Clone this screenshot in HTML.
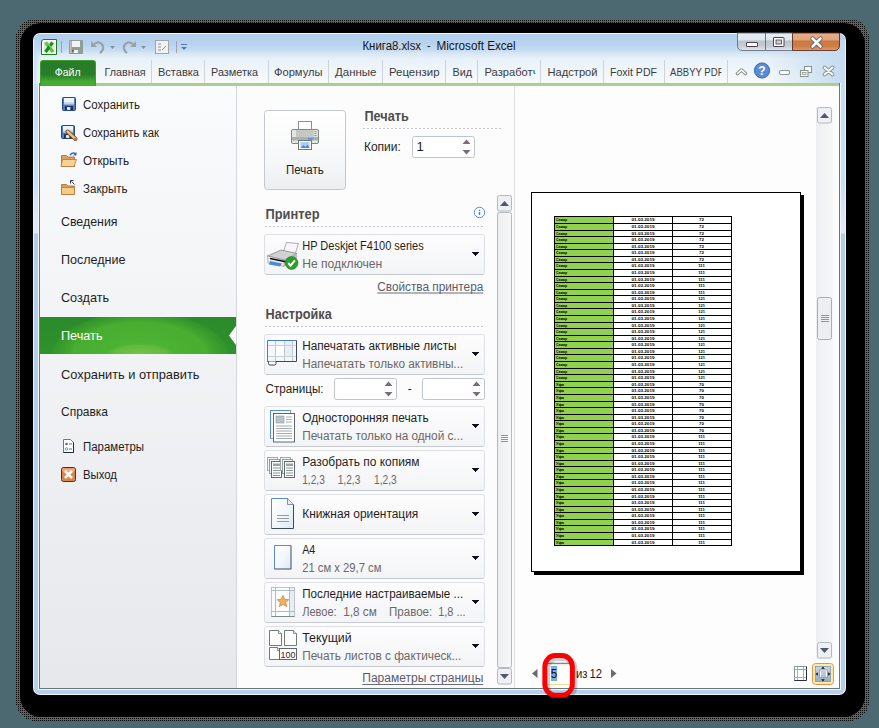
<!DOCTYPE html>
<html><head><meta charset="utf-8"><title>Excel Print</title>
<style>
html,body{margin:0;padding:0;background:#4c6870;overflow:hidden}
svg{display:block}
text{font-family:"Liberation Sans",sans-serif;white-space:pre}
</style></head><body>
<svg width="879" height="728" viewBox="0 0 879 728">
<defs>
<linearGradient id="gTitle" x1="0" y1="0" x2="1" y2="0">
  <stop offset="0" stop-color="#cfe1f4"/><stop offset="0.35" stop-color="#d9e8f6"/>
  <stop offset="0.6" stop-color="#dfeaf6"/><stop offset="1" stop-color="#d3e3f4"/>
</linearGradient>
<linearGradient id="gGlass" x1="0" y1="0" x2="0" y2="1">
  <stop offset="0" stop-color="#b2ceeb"/><stop offset="0.2" stop-color="#b8d3ee"/><stop offset="0.32" stop-color="#c6dbf1"/><stop offset="0.4" stop-color="#dae8f5"/><stop offset="0.5" stop-color="#e8f1f9"/><stop offset="0.75" stop-color="#f1f6fb"/><stop offset="1" stop-color="#f8fbfd"/>
</linearGradient>
<linearGradient id="gGlassH" x1="0" y1="0" x2="1" y2="0">
  <stop offset="0" stop-color="#c3daf0" stop-opacity="0.9"/><stop offset="0.008" stop-color="#c3daf0" stop-opacity="0"/><stop offset="0.9" stop-color="#c8dcf0" stop-opacity="0"/><stop offset="0.99" stop-color="#c3daf0" stop-opacity="0.9"/><stop offset="1" stop-color="#c3daf0" stop-opacity="0.9"/>
</linearGradient>
<linearGradient id="gFrame" x1="0" y1="34" x2="0" y2="694" gradientUnits="userSpaceOnUse">
  <stop offset="0" stop-color="#c6dcf1"/><stop offset="0.22" stop-color="#c8def2"/><stop offset="0.29" stop-color="#dfeaf6"/><stop offset="0.3015" stop-color="#dfeaf6"/><stop offset="0.3030" stop-color="#b3cde9"/><stop offset="1" stop-color="#b6cfea"/>
</linearGradient>
<linearGradient id="gTabs" x1="0" y1="0" x2="0" y2="1">
  <stop offset="0" stop-color="#e2ecf7"/><stop offset="0.5" stop-color="#eef4fb"/><stop offset="1" stop-color="#fbfcfe"/>
</linearGradient>
<linearGradient id="gFile" x1="0" y1="0" x2="0" y2="1">
  <stop offset="0" stop-color="#287c28"/><stop offset="0.55" stop-color="#2a7e2a"/><stop offset="0.72" stop-color="#3a9a30"/><stop offset="0.8" stop-color="#44aa30"/><stop offset="1" stop-color="#46ae30"/>
</linearGradient>
<linearGradient id="gNav" x1="0" y1="0" x2="0" y2="1">
  <stop offset="0" stop-color="#fafbfc"/><stop offset="1" stop-color="#e6e8ec"/>
</linearGradient>
<linearGradient id="gSel" x1="0" y1="0" x2="0" y2="1">
  <stop offset="0" stop-color="#2b8a2a"/><stop offset="1" stop-color="#2f922b"/>
</linearGradient>
<radialGradient id="gSelR" gradientUnits="userSpaceOnUse" cx="140" cy="356" r="90" gradientTransform="translate(140 356) scale(1 0.5) translate(-140 -356)">
  <stop offset="0" stop-color="#4fb634"/><stop offset="0.75" stop-color="#48ad30"/><stop offset="0.95" stop-color="#3a9c2c" stop-opacity="0.6"/><stop offset="1" stop-color="#3a9c2c" stop-opacity="0"/>
</radialGradient>
<radialGradient id="gSelR2" gradientUnits="userSpaceOnUse" cx="140" cy="356" r="36" gradientTransform="translate(140 356) scale(1 0.36) translate(-140 -356)">
  <stop offset="0" stop-color="#78c64a"/><stop offset="0.8" stop-color="#66bc40" stop-opacity="0.8"/><stop offset="1" stop-color="#5cb83c" stop-opacity="0"/>
</radialGradient>
<linearGradient id="gBtn" x1="0" y1="0" x2="0" y2="1">
  <stop offset="0" stop-color="#ffffff"/><stop offset="0.6" stop-color="#f7f8f9"/><stop offset="1" stop-color="#eceef0"/>
</linearGradient>
<linearGradient id="gDD" x1="0" y1="0" x2="0" y2="1">
  <stop offset="0" stop-color="#fdfdfe"/><stop offset="1" stop-color="#f3f4f6"/>
</linearGradient>
<linearGradient id="gTrack" x1="0" y1="0" x2="1" y2="0">
  <stop offset="0" stop-color="#eceef1"/><stop offset="1" stop-color="#f7f8f9"/>
</linearGradient>
</defs>
<rect x="0" y="0" width="879" height="728" fill="#4c6870"/>

<defs><pattern id="dots" x="0" y="0" width="2" height="2" patternUnits="userSpaceOnUse"><rect x="0" y="0" width="1" height="1" fill="#000"/></pattern></defs>
<rect x="16" y="19" width="853" height="702" rx="19" fill="url(#dots)" shape-rendering="crispEdges"/>
<rect x="20" y="23" width="845" height="694" rx="21" fill="#000"/>
<rect x="33" y="33" width="813" height="662" rx="7" fill="#eef6fc"/>
<rect x="34" y="34" width="811" height="660" rx="6" fill="url(#gFrame)"/>
<path d="M34 40 a6 6 0 0 1 6 -6 h799 a6 6 0 0 1 6 6 v44 h-811 z" fill="url(#gGlass)"/>
<rect x="34" y="40" width="811" height="44" fill="url(#gGlassH)"/>
<rect x="38" y="83" width="803" height="607" fill="#f4f8fc"/>
<rect x="39" y="83" width="801" height="606" fill="#6b7585"/>
<rect x="40" y="83" width="799" height="1" fill="#b8b8cc"/>
<rect x="40" y="84" width="799" height="2" fill="#aed08e"/>
<rect x="40" y="86" width="196" height="602" fill="url(#gNav)"/>
<rect x="236" y="86" width="1" height="602" fill="#d2d5da"/>
<rect x="237" y="86" width="277" height="602" fill="#fcfcfd"/>
<rect x="514" y="86" width="1" height="602" fill="#dcdee2"/>
<rect x="515" y="86" width="324" height="602" fill="#fdfdfd"/>
<path d="M44 39.5 H56.5 V54.5 H41.5 V42 a2.5 2.5 0 0 1 2.5 -2.5 z" fill="#fff" stroke="#1c7c1c"/>
<rect x="43.5" y="41.5" width="11" height="11" fill="#e2e6e2"/>
<path d="M45.5 42.5 L53 52" stroke="#5cc040" stroke-width="3.2"/><path d="M52.5 42.5 L45.5 52" stroke="#1e8a1e" stroke-width="3.2"/><path d="M47 42.5 L51 47.5" stroke="#7ad050" stroke-width="1.4"/>
<rect x="61" y="41" width="1" height="12" fill="#9aa4b0"/>
<rect x="69" y="40" width="14" height="14" rx="1" fill="#909e94"/><rect x="72" y="41" width="8" height="6" fill="#f2f4f4"/><rect x="70" y="41" width="1.5" height="12" fill="#b8c4c8"/><rect x="74" y="50" width="4" height="3" fill="#f0f2f2"/><rect x="72" y="50" width="1.5" height="1.5" fill="#804050"/>
<path d="M94 44 q6 -4 9 2 q1 4 -3 7" stroke="#9aa0a8" stroke-width="2.2" fill="none"/><path d="M91 41 l0 6 l6 0 z" fill="#9aa0a8"/>
<path d="M110 46 l5 0 l-2.5 3 z" fill="#8a9098"/>
<path d="M133 44 q-6 -4 -9 2 q-1 4 3 7" stroke="#9aa0a8" stroke-width="2.2" fill="none"/><path d="M136 41 l0 6 l-6 0 z" fill="#9aa0a8"/>
<path d="M141 46 l5 0 l-2.5 3 z" fill="#8a9098"/>
<rect x="155.5" y="40.5" width="13" height="13" fill="#f0f2f4" stroke="#9ea4ac"/><path d="M158 44h3M158 47h3M158 50h3M162 50 l4 -4" stroke="#8a9098" stroke-width="1"/>
<rect x="176" y="41" width="1" height="12" fill="#9aa4b0"/>
<rect x="181" y="44" width="6" height="1" fill="#5878a8"/><path d="M181 47 l6 0 l-3 3 z" fill="#5878a8"/>
<text x="362.5" y="50" font-size="12" fill="#161616" textLength="58.5" lengthAdjust="spacingAndGlyphs">Книга8.xlsx</text>
<text x="427" y="50" font-size="12" fill="#161616" textLength="3.5" lengthAdjust="spacingAndGlyphs">-</text>
<text x="436.5" y="50" font-size="12" fill="#161616" textLength="79.2" lengthAdjust="spacingAndGlyphs">Microsoft Excel</text>
<defs><linearGradient id="gWB" x1="0" y1="0" x2="0" y2="1"><stop offset="0" stop-color="#e6eef6"/><stop offset="0.4" stop-color="#dfe6ee"/><stop offset="0.45" stop-color="#bcc4cc"/><stop offset="0.75" stop-color="#c4ccd4"/><stop offset="1" stop-color="#e0e8f0"/></linearGradient>
<linearGradient id="gWC" x1="0" y1="0" x2="0" y2="1"><stop offset="0" stop-color="#eab08a"/><stop offset="0.4" stop-color="#e2a47a"/><stop offset="0.45" stop-color="#cc7a44"/><stop offset="0.75" stop-color="#cf7c46"/><stop offset="1" stop-color="#e09a6c"/></linearGradient></defs>
<path d="M737.5 33 v13 a4.5 4.5 0 0 0 4.5 4.5 h23.5 v-17.5 z" fill="url(#gWB)" stroke="#6a7280" stroke-width="0.9"/>
<rect x="765.5" y="33" width="27" height="17.5" fill="url(#gWB)" stroke="#6a7280" stroke-width="0.9"/>
<path d="M792.5 33 h47 v13 a4.5 4.5 0 0 1 -4.5 4.5 h-42.5 z" fill="url(#gWC)" stroke="#5a3020" stroke-width="0.9"/>
<rect x="746.5" y="42.5" width="11" height="4" rx="0.5" fill="#fff" stroke="#4a4050"/>
<rect x="773.5" y="37.5" width="10.5" height="9" rx="0.5" fill="#fff" stroke="#4a4050"/><rect x="776" y="40" width="5.5" height="4" fill="#c8d0d8" stroke="#4a4050" stroke-width="0.8"/>
<path d="M812.5 38.5 l8 8 M820.5 38.5 l-8 8" stroke="#505a64" stroke-width="4.2" stroke-linecap="round"/>
<path d="M812.5 38.5 l8 8 M820.5 38.5 l-8 8" stroke="#fff" stroke-width="2.6" stroke-linecap="round"/>
<path d="M40 86 v-23 a3 3 0 0 1 3 -3 h50 a3 3 0 0 1 3 3 v23 z" fill="#3aa02c"/>
<path d="M41 86 v-22.5 a2.5 2.5 0 0 1 2.5 -2.5 h49 a2.5 2.5 0 0 1 2.5 2.5 v22.5 z" fill="url(#gFile)"/>
<text x="54.7" y="76" font-size="11.5" fill="#ffffff" textLength="26" lengthAdjust="spacingAndGlyphs">Файл</text>
<defs><clipPath id="clipTab"><rect x="40" y="59" width="495.5" height="25"/><rect x="541" y="59" width="180.5" height="25"/></clipPath></defs><g clip-path="url(#clipTab)">
<text x="104.5" y="76" font-size="11" fill="#403a3c" textLength="41" lengthAdjust="spacingAndGlyphs">Главная</text>
<text x="158" y="76" font-size="11" fill="#403a3c" textLength="41" lengthAdjust="spacingAndGlyphs">Вставка</text>
<text x="211" y="76" font-size="11" fill="#403a3c" textLength="47" lengthAdjust="spacingAndGlyphs">Разметка</text>
<text x="274" y="76" font-size="11" fill="#403a3c" textLength="48.5" lengthAdjust="spacingAndGlyphs">Формулы</text>
<text x="335" y="76" font-size="11" fill="#403a3c" textLength="41.5" lengthAdjust="spacingAndGlyphs">Данные</text>
<text x="389" y="76" font-size="11" fill="#403a3c" textLength="50.5" lengthAdjust="spacingAndGlyphs">Рецензир</text>
<text x="452.5" y="76" font-size="11" fill="#403a3c" textLength="19.5" lengthAdjust="spacingAndGlyphs">Вид</text>
<text x="484.5" y="76" font-size="11" fill="#403a3c" textLength="54" lengthAdjust="spacingAndGlyphs">Разработч</text>
<text x="547.5" y="76" font-size="11" fill="#403a3c" textLength="50" lengthAdjust="spacingAndGlyphs">Надстрой</text>
<text x="610" y="76" font-size="11" fill="#403a3c" textLength="47" lengthAdjust="spacingAndGlyphs">Foxit PDF</text>
<text x="670" y="76" font-size="11" fill="#403a3c" textLength="53.5" lengthAdjust="spacingAndGlyphs">ABBYY PDF</text>
</g>
<rect x="151" y="60" width="1" height="23" fill="#cdd3da"/>
<rect x="204" y="60" width="1" height="23" fill="#cdd3da"/>
<rect x="268" y="60" width="1" height="23" fill="#cdd3da"/>
<rect x="328" y="60" width="1" height="23" fill="#cdd3da"/>
<rect x="382" y="60" width="1" height="23" fill="#cdd3da"/>
<rect x="445" y="60" width="1" height="23" fill="#cdd3da"/>
<rect x="477" y="60" width="1" height="23" fill="#cdd3da"/>
<rect x="540" y="60" width="1" height="23" fill="#cdd3da"/>
<rect x="603" y="60" width="1" height="23" fill="#cdd3da"/>
<rect x="664" y="60" width="1" height="23" fill="#cdd3da"/>
<rect x="727" y="60" width="1" height="23" fill="#cdd3da"/>
<path d="M737.5 73.5 l4 -3.5 l4 3.5" stroke="#8a968e" stroke-width="3.6" fill="none" stroke-linejoin="round" stroke-linecap="round"/><path d="M737.5 73.5 l4 -3.5 l4 3.5" stroke="#fff" stroke-width="1.6" fill="none" stroke-linejoin="round" stroke-linecap="round"/>
<circle cx="762" cy="70.5" r="7.6" fill="#5a8cd4" stroke="#2c5eae" stroke-width="0.9"/><text x="762" y="75" font-size="12" font-weight="700" fill="#fff" text-anchor="middle">?</text>
<rect x="779.5" y="70.5" width="10" height="4" rx="1.5" fill="#fff" stroke="#8a968e" stroke-width="1.1"/>
<rect x="804.5" y="66.5" width="7" height="6" fill="#fff" stroke="#8a968e" stroke-width="1.1"/><rect x="800.5" y="70.5" width="7.5" height="6" fill="#fff" stroke="#8a968e" stroke-width="1.1"/><rect x="802.5" y="72.5" width="3.5" height="2" fill="none" stroke="#8a968e" stroke-width="0.8"/>
<path d="M824.5 67.5 l8 7 M832.5 67.5 l-8 7" stroke="#8a968e" stroke-width="3.8" stroke-linecap="round"/><path d="M824.5 67.5 l8 7 M832.5 67.5 l-8 7" stroke="#fff" stroke-width="1.8" stroke-linecap="round"/>
<text x="83" y="108.5" font-size="12" fill="#1e1e1e" textLength="57" lengthAdjust="spacingAndGlyphs">Сохранить</text>
<text x="83" y="136.5" font-size="12" fill="#1e1e1e" textLength="76" lengthAdjust="spacingAndGlyphs">Сохранить как</text>
<text x="83" y="164.5" font-size="12" fill="#1e1e1e" textLength="46" lengthAdjust="spacingAndGlyphs">Открыть</text>
<text x="83" y="192.5" font-size="12" fill="#1e1e1e" textLength="44.5" lengthAdjust="spacingAndGlyphs">Закрыть</text>
<rect x="62.5" y="97.5" width="13" height="13" rx="1" fill="#4f7cc4" stroke="#27468a"/>
<rect x="64" y="98" width="10" height="6.3" fill="#eef3fa"/>
<rect x="64" y="102.2" width="10" height="2.1" fill="#c4d4ea"/>
<rect x="65" y="106.2" width="8" height="3.8" fill="#1f2c48"/>
<rect x="66.9" y="107.1" width="3.5" height="2.8" fill="#e8ecf2"/>
<rect x="61.5" y="125.5" width="13" height="13" rx="1" fill="#4f7cc4" stroke="#27468a"/>
<rect x="63" y="126" width="10" height="6.3" fill="#eef3fa"/>
<rect x="63" y="130.2" width="10" height="2.1" fill="#c4d4ea"/>
<rect x="64" y="134.2" width="8" height="3.8" fill="#1f2c48"/>
<rect x="65.9" y="135.1" width="3.5" height="2.8" fill="#e8ecf2"/>
<path d="M67.5 131.5 l8 7.5" stroke="#5a3a30" stroke-width="4" stroke-linecap="round"/><path d="M67.5 131.5 l8 7.5" stroke="#f0c860" stroke-width="2.4" stroke-linecap="round"/><path d="M74.5 138 l1.5 1.5" stroke="#e07040" stroke-width="2.2"/>
<path d="M61.5 155.5 h5 l1.5 1.5 h6.5 v9.5 h-13 z" fill="#dca060" stroke="#a06830" stroke-width="0.8"/>
<path d="M62.5 159.5 h14 l-2.5 7 h-13 z" fill="#f6d294" stroke="#b07838" stroke-width="0.8"/>
<path d="M70 155 q3 -3.5 6 -1" stroke="#3a68b8" stroke-width="1.4" fill="none"/><path d="M76.5 152 v3.5 h-3.5 z" fill="#3a68b8"/>
<path d="M61.5 184.5 h5 l1.5 1.5 h6.5 v8.5 h-13 z" fill="#dca060" stroke="#a06830" stroke-width="0.8"/>
<path d="M61.5 187.5 h13 v7 h-13 z" fill="#f4cc84" stroke="#b07838" stroke-width="0.8"/>
<path d="M71.5 181.5 l3 3" stroke="#303848" stroke-width="1"/><path d="M70.5 180.5 h3 M70.5 180.5 v3" stroke="#303848" stroke-width="1"/>
<text x="61" y="226" font-size="13" fill="#1e1e1e" textLength="56.5" lengthAdjust="spacingAndGlyphs">Сведения</text>
<text x="61" y="264" font-size="13" fill="#1e1e1e" textLength="64.5" lengthAdjust="spacingAndGlyphs">Последние</text>
<text x="61" y="302" font-size="13" fill="#1e1e1e" textLength="48" lengthAdjust="spacingAndGlyphs">Создать</text>
<text x="61" y="378.5" font-size="13" fill="#1e1e1e" textLength="138.5" lengthAdjust="spacingAndGlyphs">Сохранить и отправить</text>
<text x="61" y="416" font-size="13" fill="#1e1e1e" textLength="47" lengthAdjust="spacingAndGlyphs">Справка</text>
<rect x="40" y="317" width="196" height="37" fill="url(#gSel)"/>
<rect x="40" y="317" width="196" height="37" fill="url(#gSelR)"/>
<rect x="40" y="317" width="196" height="37" fill="url(#gSelR2)"/>
<path d="M236 326 L229 335.5 L236 345 Z" fill="#ffffff"/>
<text x="61" y="340" font-size="13" fill="#ffffff" textLength="41.5" lengthAdjust="spacingAndGlyphs">Печать</text>
<path d="M63.5 439.5 h7 l3 3 v10 h-10 z" fill="#fff" stroke="#5a7aa8"/><path d="M73.5 442.5 v10 h-10" fill="none" stroke="#20283a"/>
<circle cx="66.5" cy="444" r="1.3" fill="#5a6a80"/><circle cx="66.5" cy="449" r="1.3" fill="none" stroke="#4a7ac8" stroke-width="0.8"/><path d="M69 444h3M69 449h3" stroke="#4a7ac8" stroke-width="1.2"/>
<text x="83" y="450.5" font-size="12" fill="#1e1e1e" textLength="61" lengthAdjust="spacingAndGlyphs">Параметры</text>
<rect x="61.5" y="467.5" width="14" height="14" rx="2" fill="#d8864a" stroke="#6a2030"/><rect x="62.5" y="468.5" width="12" height="3" fill="#ecb080"/>
<path d="M65 471 l7 7 M72 471 l-7 7" stroke="#fff" stroke-width="2.6"/>
<text x="83" y="478.5" font-size="12" fill="#1e1e1e" textLength="34" lengthAdjust="spacingAndGlyphs">Выход</text>
<rect x="264.5" y="110.5" width="81" height="79" rx="3" fill="url(#gBtn)" stroke="#c3c8ce"/>
<rect x="298.5" y="121.5" width="13" height="8" fill="#fff" stroke="#8a948c"/>
<rect x="291.5" y="129.5" width="27" height="14" rx="1.5" fill="#e4e6e4" stroke="#7e8a84"/>
<rect x="296" y="130" width="18" height="7" fill="#c8cac8"/><path d="M297 132h16M297 135h16" stroke="#b0b4b0" stroke-width="0.6" stroke-dasharray="1 1"/>
<rect x="292" y="137" width="26" height="3.5" fill="#a9b2aa"/><rect x="308" y="138" width="5" height="1.5" fill="#5a8ad0"/>
<path d="M314.5 131.5h2M314.5 133.5h2M314.5 135.5h2" stroke="#707a74" stroke-width="0.8"/>
<rect x="298.5" y="140.5" width="13" height="9" fill="#fff" stroke="#6e7872"/><rect x="300.5" y="142" width="9" height="6" fill="#a8d0f4"/><path d="M300.5 148 l3 -3 l2 2 l2 -2.5 l2 3.5 z" fill="#4a88d0"/>
<text x="286" y="174" font-size="12" fill="#1e1e1e" textLength="37.7" lengthAdjust="spacingAndGlyphs">Печать</text>
<text x="364.5" y="121" font-size="14" fill="#4e4e4e" font-weight="700" textLength="44.3" lengthAdjust="spacingAndGlyphs">Печать</text>
<line x1="363" y1="128.5" x2="502" y2="128.5" stroke="#c4c6ca" stroke-dasharray="2 2"/>
<text x="363.9" y="151" font-size="12" fill="#1e1e1e" textLength="37" lengthAdjust="spacingAndGlyphs">Копии:</text>
<rect x="412.5" y="136.5" width="62" height="21" rx="2" fill="#fff" stroke="#bfc5cc"/>
<text x="416.5" y="151" font-size="13" fill="#1e1e1e">1</text>
<path d="M462.5 144 l4 -4.5 l4 4.5 z" fill="#7a6a7a"/><path d="M462.5 150 l4 4.5 l4 -4.5 z" fill="#7a6a7a"/>
<text x="265.5" y="219" font-size="14" fill="#4e4e4e" font-weight="700" textLength="54" lengthAdjust="spacingAndGlyphs">Принтер</text>
<circle cx="479.5" cy="212.5" r="5.2" fill="#fff" stroke="#5a8ad0"/><rect x="478.8" y="212" width="1.4" height="3" fill="#4a7ac8"/><rect x="478.8" y="209.8" width="1.4" height="1.3" fill="#4a7ac8"/>
<line x1="265" y1="226.5" x2="485" y2="226.5" stroke="#c4c6ca" stroke-dasharray="2 2"/>
<rect x="264.5" y="234.5" width="220" height="40" rx="2" fill="url(#gDD)" stroke="#dcdfe3"/>
<rect x="266" y="274" width="217" height="1" fill="#c6c9cd"/>
<g fill="#10101c" shape-rendering="crispEdges"><rect x="472" y="252" width="7" height="1"/><rect x="473" y="253" width="5" height="1"/><rect x="474" y="254" width="3" height="1"/><rect x="475" y="255" width="1" height="1"/></g>
<path d="M286.5 242.5 L298.5 243.5 L295 254.5 L283 252.5 Z" fill="#f6f6f6" stroke="#9a9a9a" stroke-width="0.8"/>
<path d="M267.5 256 L281 250 L297 253.5 L284 260 Z" fill="#d0d2d4" stroke="#7a7a7a" stroke-width="0.7"/>
<path d="M267.5 256 L284 260 L284 266.5 L268 263 Z" fill="#eeeeee" stroke="#8a8a8a" stroke-width="0.6"/>
<path d="M284 260 L297 253.5 L297 259 L284 266.5 Z" fill="#b8babc"/>
<path d="M270 258.5 L287 262" stroke="#101010" stroke-width="1.6"/>
<path d="M270 261 L282 263.5 L280 266.5 L269 264.5 Z" fill="#4a8ad8"/>
<circle cx="291.6" cy="263" r="6.4" fill="#2c9e2a" stroke="#1e7a1e" stroke-width="0.6"/><path d="M288.3 263 l2.3 2.6 l4.3 -5.2" stroke="#fff" stroke-width="2" fill="none"/>
<text x="302.2" y="249.9" font-size="12" fill="#1e1e1e" textLength="121.5" lengthAdjust="spacingAndGlyphs">HP Deskjet F4100 series</text>
<text x="302.2" y="267.9" font-size="12" fill="#6c6866" textLength="80" lengthAdjust="spacingAndGlyphs">Не подключен</text>
<text x="377.3" y="290.9" font-size="12" fill="#5a5a6a" textLength="106" lengthAdjust="spacingAndGlyphs">Свойства принтера</text>
<rect x="377.3" y="292.5" width="106" height="1" fill="#6a6a7a"/>
<text x="265.5" y="319" font-size="14" fill="#4e4e4e" font-weight="700" textLength="66.3" lengthAdjust="spacingAndGlyphs">Настройка</text>
<line x1="265" y1="326.5" x2="485" y2="326.5" stroke="#c4c6ca" stroke-dasharray="2 2"/>
<rect x="264.5" y="334.5" width="220" height="40" rx="2" fill="url(#gDD)" stroke="#dcdfe3"/>
<rect x="266" y="374" width="217" height="1" fill="#c6c9cd"/>
<g fill="#10101c" shape-rendering="crispEdges"><rect x="472" y="352" width="7" height="1"/><rect x="473" y="353" width="5" height="1"/><rect x="474" y="354" width="3" height="1"/><rect x="475" y="355" width="1" height="1"/></g>
<rect x="267.5" y="340.5" width="29" height="21" fill="#f4f8fc"/><rect x="276" y="346" width="8" height="10" fill="#fff"/><rect x="285" y="341" width="7" height="15" fill="#e6eef8"/>
<path d="M275.5 341v20M284.5 341v20M292.5 341v20" stroke="#c0c8c8" stroke-width="1"/><path d="M268 345.5h28M268 356.5h28" stroke="#c8d0cc" stroke-width="1"/>
<path d="M267.5 361.5 v-21 h29" fill="none" stroke="#4a7ac8"/><path d="M296.5 340.5 v21 h-29" fill="none" stroke="#3e4658"/>
<path d="M268.5 361.5 v2 a1.5 1.5 0 0 0 1.5 1.5 h4.5 a1.5 1.5 0 0 0 1.5 -1.5 v-2" fill="#fff" stroke="#3e4658"/>
<text x="302.2" y="349.9" font-size="12" fill="#1e1e1e" textLength="154.3" lengthAdjust="spacingAndGlyphs">Напечатать активные листы</text>
<text x="302.2" y="367.9" font-size="12" fill="#6c6866" textLength="161" lengthAdjust="spacingAndGlyphs">Напечатать только активны...</text>
<text x="265.6" y="392.8" font-size="12" fill="#1e1e1e" textLength="58" lengthAdjust="spacingAndGlyphs">Страницы:</text>
<rect x="334.5" y="378.5" width="62" height="21" rx="2" fill="#fff" stroke="#bfc5cc"/>
<path d="M384.5 386 l4 -4.5 l4 4.5 z" fill="#7a6a7a"/><path d="M384.5 392 l4 4.5 l4 -4.5 z" fill="#7a6a7a"/>
<rect x="422.5" y="378.5" width="62" height="21" rx="2" fill="#fff" stroke="#bfc5cc"/>
<path d="M472.5 386 l4 -4.5 l4 4.5 z" fill="#7a6a7a"/><path d="M472.5 392 l4 4.5 l4 -4.5 z" fill="#7a6a7a"/>
<text x="407.8" y="392.8" font-size="12" fill="#1e1e1e">-</text>
<rect x="264.5" y="406.5" width="220" height="40" rx="2" fill="url(#gDD)" stroke="#dcdfe3"/>
<rect x="266" y="446" width="217" height="1" fill="#c6c9cd"/>
<g fill="#10101c" shape-rendering="crispEdges"><rect x="472" y="424" width="7" height="1"/><rect x="473" y="425" width="5" height="1"/><rect x="474" y="426" width="3" height="1"/><rect x="475" y="427" width="1" height="1"/></g>
<rect x="270.5" y="410.5" width="20" height="28" fill="#f4f8fc" stroke="#7890a8" stroke-width="0.8"/><path d="M270.5 438.5 v-28 h20" fill="none" stroke="#5a8ad0"/>
<rect x="273.5" y="413.5" width="21" height="28.5" fill="#fff" stroke="#4e5a5a" stroke-width="0.9"/><rect x="276" y="416" width="8" height="7" fill="#b8c4c8" stroke="#8a9898" stroke-width="0.6"/><path d="M286 417h6M286 419.5h6M286 422h6M276 426h16M276 428.5h16M276 431h16M276 433.5h16M276 436h16M276 438.5h16" stroke="#8a9494" stroke-width="0.8"/>
<text x="302.2" y="421.9" font-size="12" fill="#1e1e1e" textLength="126.4" lengthAdjust="spacingAndGlyphs">Односторонняя печать</text>
<text x="302.2" y="439.9" font-size="12" fill="#6c6866" textLength="161" lengthAdjust="spacingAndGlyphs">Печатать только на одной с...</text>
<rect x="264.5" y="450.5" width="220" height="40" rx="2" fill="url(#gDD)" stroke="#dcdfe3"/>
<rect x="266" y="490" width="217" height="1" fill="#c6c9cd"/>
<g fill="#10101c" shape-rendering="crispEdges"><rect x="472" y="468" width="7" height="1"/><rect x="473" y="469" width="5" height="1"/><rect x="474" y="470" width="3" height="1"/><rect x="475" y="471" width="1" height="1"/></g>
<rect x="267.5" y="457.5" width="10" height="13" fill="#f0f4f8" stroke="#8a9a98" stroke-width="0.8"/>
<rect x="269.5" y="459.5" width="10" height="14" fill="#f6f8fa" stroke="#7a8a88" stroke-width="0.8"/>
<rect x="271.5" y="461.5" width="10" height="16" fill="#fff" stroke="#4e5e5a" stroke-width="0.9"/>
<rect x="273" y="463.5" width="7" height="2.5" fill="#98a4a0"/><path d="M273 468h7M273 470.5h7M273 473h7M273 475.5h7" stroke="#6a7a76" stroke-width="0.8"/>
<rect x="280.5" y="457.5" width="10" height="13" fill="#f0f4f8" stroke="#8a9a98" stroke-width="0.8"/>
<rect x="282.5" y="459.5" width="10" height="14" fill="#f6f8fa" stroke="#7a8a88" stroke-width="0.8"/>
<rect x="284.5" y="461.5" width="10" height="16" fill="#fff" stroke="#4e5e5a" stroke-width="0.9"/>
<rect x="286" y="463.5" width="7" height="2.5" fill="#98a4a0"/><path d="M286 468h7M286 470.5h7M286 473h7M286 475.5h7" stroke="#6a7a76" stroke-width="0.8"/>
<text x="302.2" y="465.9" font-size="12" fill="#1e1e1e" textLength="117.4" lengthAdjust="spacingAndGlyphs">Разобрать по копиям</text>
<text x="302.2" y="483.9" font-size="12" fill="#6c6866" textLength="22.7" lengthAdjust="spacingAndGlyphs">1,2,3</text>
<text x="337.7" y="483.9" font-size="12" fill="#6c6866" textLength="22.7" lengthAdjust="spacingAndGlyphs">1,2,3</text>
<text x="374" y="483.9" font-size="12" fill="#6c6866" textLength="22.7" lengthAdjust="spacingAndGlyphs">1,2,3</text>
<rect x="264.5" y="494.5" width="220" height="40" rx="2" fill="url(#gDD)" stroke="#dcdfe3"/>
<rect x="266" y="534" width="217" height="1" fill="#c6c9cd"/>
<g fill="#10101c" shape-rendering="crispEdges"><rect x="472" y="512" width="7" height="1"/><rect x="473" y="513" width="5" height="1"/><rect x="474" y="514" width="3" height="1"/><rect x="475" y="515" width="1" height="1"/></g>
<path d="M271.5 498.5 h16 l6 6 v24 h-22 z" fill="url(#gPg)"/><path d="M271.5 528.5 v-30 h16" fill="none" stroke="#5a8ad0"/><path d="M287.5 498.5 l6 6 v24 h-22" fill="none" stroke="#3e4a5a"/><path d="M287.5 498.5 v6 h6" fill="#e8eef6" stroke="#6a7a8a" stroke-width="0.8"/><path d="M277 515.5h12M277 518.5h12M277 521.5h12" stroke="#8a9498" stroke-width="0.9"/>
<text x="302.2" y="517.9" font-size="12" fill="#1e1e1e" textLength="116.1" lengthAdjust="spacingAndGlyphs">Книжная ориентация</text>
<rect x="264.5" y="538.5" width="220" height="40" rx="2" fill="url(#gDD)" stroke="#dcdfe3"/>
<rect x="266" y="578" width="217" height="1" fill="#c6c9cd"/>
<g fill="#10101c" shape-rendering="crispEdges"><rect x="472" y="556" width="7" height="1"/><rect x="473" y="557" width="5" height="1"/><rect x="474" y="558" width="3" height="1"/><rect x="475" y="559" width="1" height="1"/></g>
<defs><linearGradient id="gPg" x1="0" y1="0" x2="1" y2="1"><stop offset="0" stop-color="#ffffff"/><stop offset="0.5" stop-color="#f4f8fc"/><stop offset="1" stop-color="#dce8f4"/></linearGradient></defs>
<rect x="274.5" y="545.5" width="16.5" height="23.5" fill="url(#gPg)"/><path d="M274.5 569 V545.5 H291" fill="none" stroke="#5a8ad0"/><path d="M291 545.5 V569 H274.5" fill="none" stroke="#3e4a5a"/>
<text x="302.2" y="553.9" font-size="12" fill="#1e1e1e" textLength="13.1" lengthAdjust="spacingAndGlyphs">A4</text>
<text x="302.2" y="571.9" font-size="12" fill="#6c6866" textLength="79.2" lengthAdjust="spacingAndGlyphs">21 см x 29,7 см</text>
<rect x="264.5" y="582.5" width="220" height="40" rx="2" fill="url(#gDD)" stroke="#dcdfe3"/>
<rect x="266" y="622" width="217" height="1" fill="#c6c9cd"/>
<g fill="#10101c" shape-rendering="crispEdges"><rect x="472" y="600" width="7" height="1"/><rect x="473" y="601" width="5" height="1"/><rect x="474" y="602" width="3" height="1"/><rect x="475" y="603" width="1" height="1"/></g>
<rect x="271.5" y="587.5" width="23" height="29" fill="#fafcfe" stroke="#b4bec4" stroke-width="0.9"/><rect x="289" y="588" width="5" height="28" fill="#e4eef8"/>
<path d="M275.5 587v30M289.5 587v30M271 590.5h24M271 611.5h24" stroke="#a8b4b8" stroke-width="0.9"/><path d="M271.5 616.5h23" stroke="#7a8a88"/>
<path d="M283 595.5 l1.7 3.8 l4.1 0.4 l-3.1 2.7 l0.9 4.1 l-3.6 -2.1 l-3.6 2.1 l0.9 -4.1 l-3.1 -2.7 l4.1 -0.4 z" fill="#f0b060" stroke="#d07830" stroke-width="0.7"/>
<text x="302.2" y="597.9" font-size="12" fill="#1e1e1e" textLength="161" lengthAdjust="spacingAndGlyphs">Последние настраиваемые ...</text>
<text x="302.2" y="615.9" font-size="12" fill="#6c6866" textLength="34.4" lengthAdjust="spacingAndGlyphs">Левое:</text>
<text x="343.2" y="615.9" font-size="12" fill="#6c6866" textLength="33.6" lengthAdjust="spacingAndGlyphs">1,8 см</text>
<text x="389" y="615.9" font-size="12" fill="#6c6866" textLength="43.2" lengthAdjust="spacingAndGlyphs">Правое:</text>
<text x="438.2" y="615.9" font-size="12" fill="#6c6866" textLength="27.3" lengthAdjust="spacingAndGlyphs">1,8 ...</text>
<rect x="264.5" y="626.5" width="220" height="40" rx="2" fill="url(#gDD)" stroke="#dcdfe3"/>
<rect x="266" y="666" width="217" height="1" fill="#c6c9cd"/>
<g fill="#10101c" shape-rendering="crispEdges"><rect x="472" y="644" width="7" height="1"/><rect x="473" y="645" width="5" height="1"/><rect x="474" y="646" width="3" height="1"/><rect x="475" y="647" width="1" height="1"/></g>
<path d="M269.5 630.5 H278.5 L281.5 633.5 V645.5 H269.5 Z" fill="#fff" stroke="#5e6e66" stroke-width="0.9"/><path d="M278.5 630.5 V633.5 H281.5" fill="#e8eef4" stroke="#5e6e66" stroke-width="0.7"/>
<path d="M284.5 630.5 H293.5 L296.5 633.5 V645.5 H284.5 Z" fill="#fff" stroke="#5e6e66" stroke-width="0.9"/><path d="M293.5 630.5 V633.5 H296.5" fill="#e8eef4" stroke="#5e6e66" stroke-width="0.7"/>
<path d="M269.5 647.5 H277.5 L280.5 650.5 V659.5 H269.5 Z" fill="#fff" stroke="#5e6e66" stroke-width="0.9"/><path d="M277.5 647.5 V650.5 H280.5" fill="#e8eef4" stroke="#5e6e66" stroke-width="0.7"/>
<rect x="279.5" y="648.5" width="17" height="11" fill="#fff" stroke="#4e5a56" stroke-width="0.9"/>
<text x="288" y="658" font-size="9.5" fill="#3a1a28" text-anchor="middle" textLength="15" lengthAdjust="spacingAndGlyphs">100</text>
<text x="302.2" y="641.9" font-size="12" fill="#1e1e1e" textLength="49.5" lengthAdjust="spacingAndGlyphs">Текущий</text>
<text x="302.2" y="659.9" font-size="12" fill="#6c6866" textLength="159.2" lengthAdjust="spacingAndGlyphs">Печать листов с фактическ...</text>
<text x="362.3" y="682.4" font-size="12" fill="#5a5a6a" textLength="121" lengthAdjust="spacingAndGlyphs">Параметры страницы</text>
<rect x="362.3" y="684" width="121" height="1" fill="#6a6a7a"/>
<rect x="497" y="195" width="15" height="490" fill="#f2f3f5"/>
<rect x="497.5" y="195.5" width="14" height="15.5" rx="2" fill="#eef0f3" stroke="#b4bac2"/>
<path d="M500 206 h9 l-4.5 -5 z" fill="#4e5a6c"/>
<rect x="497.5" y="212.5" width="14" height="455" rx="2" fill="url(#gTrack)" stroke="#b4bac2"/>
<path d="M501 435.5h7M501 437.5h7M501 439.5h7M501 441.5h7" stroke="#8a9a94" stroke-width="1"/>
<rect x="497.5" y="668.5" width="14" height="15.5" rx="2" fill="#eef0f3" stroke="#b4bac2"/>
<path d="M500 674 h9 l-4.5 5 z" fill="#4e5a6c"/>
<rect x="534" y="195" width="270" height="380" fill="#000"/>
<rect x="531.5" y="192.5" width="269" height="379" fill="#fff" stroke="#000"/>
<rect x="554" y="216" width="59" height="329" fill="#92d050"/>
<g shape-rendering="crispEdges">
<rect x="554" y="216" width="178" height="1" fill="#000"/>
<rect x="554" y="223" width="178" height="1" fill="#000"/>
<rect x="554" y="230" width="178" height="1" fill="#000"/>
<rect x="554" y="236" width="178" height="1" fill="#000"/>
<rect x="554" y="243" width="178" height="1" fill="#000"/>
<rect x="554" y="249" width="178" height="1" fill="#000"/>
<rect x="554" y="256" width="178" height="1" fill="#000"/>
<rect x="554" y="262" width="178" height="1" fill="#000"/>
<rect x="554" y="269" width="178" height="1" fill="#000"/>
<rect x="554" y="276" width="178" height="1" fill="#000"/>
<rect x="554" y="282" width="178" height="1" fill="#000"/>
<rect x="554" y="289" width="178" height="1" fill="#000"/>
<rect x="554" y="295" width="178" height="1" fill="#000"/>
<rect x="554" y="302" width="178" height="1" fill="#000"/>
<rect x="554" y="308" width="178" height="1" fill="#000"/>
<rect x="554" y="315" width="178" height="1" fill="#000"/>
<rect x="554" y="322" width="178" height="1" fill="#000"/>
<rect x="554" y="328" width="178" height="1" fill="#000"/>
<rect x="554" y="335" width="178" height="1" fill="#000"/>
<rect x="554" y="341" width="178" height="1" fill="#000"/>
<rect x="554" y="348" width="178" height="1" fill="#000"/>
<rect x="554" y="354" width="178" height="1" fill="#000"/>
<rect x="554" y="361" width="178" height="1" fill="#000"/>
<rect x="554" y="368" width="178" height="1" fill="#000"/>
<rect x="554" y="374" width="178" height="1" fill="#000"/>
<rect x="554" y="381" width="178" height="1" fill="#000"/>
<rect x="554" y="387" width="178" height="1" fill="#000"/>
<rect x="554" y="394" width="178" height="1" fill="#000"/>
<rect x="554" y="401" width="178" height="1" fill="#000"/>
<rect x="554" y="407" width="178" height="1" fill="#000"/>
<rect x="554" y="414" width="178" height="1" fill="#000"/>
<rect x="554" y="420" width="178" height="1" fill="#000"/>
<rect x="554" y="427" width="178" height="1" fill="#000"/>
<rect x="554" y="433" width="178" height="1" fill="#000"/>
<rect x="554" y="440" width="178" height="1" fill="#000"/>
<rect x="554" y="447" width="178" height="1" fill="#000"/>
<rect x="554" y="453" width="178" height="1" fill="#000"/>
<rect x="554" y="460" width="178" height="1" fill="#000"/>
<rect x="554" y="466" width="178" height="1" fill="#000"/>
<rect x="554" y="473" width="178" height="1" fill="#000"/>
<rect x="554" y="479" width="178" height="1" fill="#000"/>
<rect x="554" y="486" width="178" height="1" fill="#000"/>
<rect x="554" y="493" width="178" height="1" fill="#000"/>
<rect x="554" y="499" width="178" height="1" fill="#000"/>
<rect x="554" y="506" width="178" height="1" fill="#000"/>
<rect x="554" y="512" width="178" height="1" fill="#000"/>
<rect x="554" y="519" width="178" height="1" fill="#000"/>
<rect x="554" y="525" width="178" height="1" fill="#000"/>
<rect x="554" y="532" width="178" height="1" fill="#000"/>
<rect x="554" y="539" width="178" height="1" fill="#000"/>
<rect x="554" y="545" width="178" height="1" fill="#000"/>
<rect x="554" y="216" width="1" height="330" fill="#000"/>
<rect x="613" y="216" width="1" height="330" fill="#000"/>
<rect x="672" y="216" width="1" height="330" fill="#000"/>
<rect x="731" y="216" width="1" height="330" fill="#000"/>
</g>
<g font-weight="700" fill="#000">
<text x="556" y="221.00" font-size="4.1" textLength="11" lengthAdjust="spacingAndGlyphs">Самар</text>
<text x="631.5" y="221.00" font-size="4.1" textLength="23" lengthAdjust="spacingAndGlyphs">01.03.2019</text>
<text x="699.1" y="221.00" font-size="4.1" textLength="5" lengthAdjust="spacingAndGlyphs">72</text>
<text x="556" y="228.00" font-size="4.1" textLength="11" lengthAdjust="spacingAndGlyphs">Самар</text>
<text x="631.5" y="228.00" font-size="4.1" textLength="23" lengthAdjust="spacingAndGlyphs">01.03.2019</text>
<text x="699.1" y="228.00" font-size="4.1" textLength="5" lengthAdjust="spacingAndGlyphs">72</text>
<text x="556" y="235.00" font-size="4.1" textLength="11" lengthAdjust="spacingAndGlyphs">Самар</text>
<text x="631.5" y="235.00" font-size="4.1" textLength="23" lengthAdjust="spacingAndGlyphs">01.03.2019</text>
<text x="699.1" y="235.00" font-size="4.1" textLength="5" lengthAdjust="spacingAndGlyphs">72</text>
<text x="556" y="241.00" font-size="4.1" textLength="11" lengthAdjust="spacingAndGlyphs">Самар</text>
<text x="631.5" y="241.00" font-size="4.1" textLength="23" lengthAdjust="spacingAndGlyphs">01.03.2019</text>
<text x="699.1" y="241.00" font-size="4.1" textLength="5" lengthAdjust="spacingAndGlyphs">72</text>
<text x="556" y="248.00" font-size="4.1" textLength="11" lengthAdjust="spacingAndGlyphs">Самар</text>
<text x="631.5" y="248.00" font-size="4.1" textLength="23" lengthAdjust="spacingAndGlyphs">01.03.2019</text>
<text x="699.1" y="248.00" font-size="4.1" textLength="5" lengthAdjust="spacingAndGlyphs">72</text>
<text x="556" y="254.00" font-size="4.1" textLength="11" lengthAdjust="spacingAndGlyphs">Самар</text>
<text x="631.5" y="254.00" font-size="4.1" textLength="23" lengthAdjust="spacingAndGlyphs">01.03.2019</text>
<text x="699.1" y="254.00" font-size="4.1" textLength="5" lengthAdjust="spacingAndGlyphs">72</text>
<text x="556" y="261.00" font-size="4.1" textLength="11" lengthAdjust="spacingAndGlyphs">Самар</text>
<text x="631.5" y="261.00" font-size="4.1" textLength="23" lengthAdjust="spacingAndGlyphs">01.03.2019</text>
<text x="699.1" y="261.00" font-size="4.1" textLength="5" lengthAdjust="spacingAndGlyphs">72</text>
<text x="556" y="267.00" font-size="4.1" textLength="11" lengthAdjust="spacingAndGlyphs">Самар</text>
<text x="631.5" y="267.00" font-size="4.1" textLength="23" lengthAdjust="spacingAndGlyphs">01.03.2019</text>
<text x="698.2" y="267.00" font-size="4.1" textLength="6.8" lengthAdjust="spacingAndGlyphs">111</text>
<text x="556" y="274.00" font-size="4.1" textLength="11" lengthAdjust="spacingAndGlyphs">Самар</text>
<text x="631.5" y="274.00" font-size="4.1" textLength="23" lengthAdjust="spacingAndGlyphs">01.03.2019</text>
<text x="698.2" y="274.00" font-size="4.1" textLength="6.8" lengthAdjust="spacingAndGlyphs">111</text>
<text x="556" y="281.00" font-size="4.1" textLength="11" lengthAdjust="spacingAndGlyphs">Самар</text>
<text x="631.5" y="281.00" font-size="4.1" textLength="23" lengthAdjust="spacingAndGlyphs">01.03.2019</text>
<text x="698.2" y="281.00" font-size="4.1" textLength="6.8" lengthAdjust="spacingAndGlyphs">111</text>
<text x="556" y="287.00" font-size="4.1" textLength="11" lengthAdjust="spacingAndGlyphs">Самар</text>
<text x="631.5" y="287.00" font-size="4.1" textLength="23" lengthAdjust="spacingAndGlyphs">01.03.2019</text>
<text x="698.2" y="287.00" font-size="4.1" textLength="6.8" lengthAdjust="spacingAndGlyphs">111</text>
<text x="556" y="294.00" font-size="4.1" textLength="11" lengthAdjust="spacingAndGlyphs">Самар</text>
<text x="631.5" y="294.00" font-size="4.1" textLength="23" lengthAdjust="spacingAndGlyphs">01.03.2019</text>
<text x="698.2" y="294.00" font-size="4.1" textLength="6.8" lengthAdjust="spacingAndGlyphs">111</text>
<text x="556" y="300.00" font-size="4.1" textLength="11" lengthAdjust="spacingAndGlyphs">Самар</text>
<text x="631.5" y="300.00" font-size="4.1" textLength="23" lengthAdjust="spacingAndGlyphs">01.03.2019</text>
<text x="698.2" y="300.00" font-size="4.1" textLength="6.8" lengthAdjust="spacingAndGlyphs">121</text>
<text x="556" y="307.00" font-size="4.1" textLength="11" lengthAdjust="spacingAndGlyphs">Самар</text>
<text x="631.5" y="307.00" font-size="4.1" textLength="23" lengthAdjust="spacingAndGlyphs">01.03.2019</text>
<text x="698.2" y="307.00" font-size="4.1" textLength="6.8" lengthAdjust="spacingAndGlyphs">121</text>
<text x="556" y="313.00" font-size="4.1" textLength="11" lengthAdjust="spacingAndGlyphs">Самар</text>
<text x="631.5" y="313.00" font-size="4.1" textLength="23" lengthAdjust="spacingAndGlyphs">01.03.2019</text>
<text x="698.2" y="313.00" font-size="4.1" textLength="6.8" lengthAdjust="spacingAndGlyphs">121</text>
<text x="556" y="320.00" font-size="4.1" textLength="11" lengthAdjust="spacingAndGlyphs">Самар</text>
<text x="631.5" y="320.00" font-size="4.1" textLength="23" lengthAdjust="spacingAndGlyphs">01.03.2019</text>
<text x="698.2" y="320.00" font-size="4.1" textLength="6.8" lengthAdjust="spacingAndGlyphs">121</text>
<text x="556" y="327.00" font-size="4.1" textLength="11" lengthAdjust="spacingAndGlyphs">Самар</text>
<text x="631.5" y="327.00" font-size="4.1" textLength="23" lengthAdjust="spacingAndGlyphs">01.03.2019</text>
<text x="698.2" y="327.00" font-size="4.1" textLength="6.8" lengthAdjust="spacingAndGlyphs">121</text>
<text x="556" y="333.00" font-size="4.1" textLength="11" lengthAdjust="spacingAndGlyphs">Самар</text>
<text x="631.5" y="333.00" font-size="4.1" textLength="23" lengthAdjust="spacingAndGlyphs">01.03.2019</text>
<text x="698.2" y="333.00" font-size="4.1" textLength="6.8" lengthAdjust="spacingAndGlyphs">121</text>
<text x="556" y="340.00" font-size="4.1" textLength="11" lengthAdjust="spacingAndGlyphs">Самар</text>
<text x="631.5" y="340.00" font-size="4.1" textLength="23" lengthAdjust="spacingAndGlyphs">01.03.2019</text>
<text x="698.2" y="340.00" font-size="4.1" textLength="6.8" lengthAdjust="spacingAndGlyphs">121</text>
<text x="556" y="346.00" font-size="4.1" textLength="11" lengthAdjust="spacingAndGlyphs">Самар</text>
<text x="631.5" y="346.00" font-size="4.1" textLength="23" lengthAdjust="spacingAndGlyphs">01.03.2019</text>
<text x="698.2" y="346.00" font-size="4.1" textLength="6.8" lengthAdjust="spacingAndGlyphs">121</text>
<text x="556" y="353.00" font-size="4.1" textLength="11" lengthAdjust="spacingAndGlyphs">Самар</text>
<text x="631.5" y="353.00" font-size="4.1" textLength="23" lengthAdjust="spacingAndGlyphs">01.03.2019</text>
<text x="698.2" y="353.00" font-size="4.1" textLength="6.8" lengthAdjust="spacingAndGlyphs">121</text>
<text x="556" y="359.00" font-size="4.1" textLength="11" lengthAdjust="spacingAndGlyphs">Самар</text>
<text x="631.5" y="359.00" font-size="4.1" textLength="23" lengthAdjust="spacingAndGlyphs">01.03.2019</text>
<text x="698.2" y="359.00" font-size="4.1" textLength="6.8" lengthAdjust="spacingAndGlyphs">121</text>
<text x="556" y="366.00" font-size="4.1" textLength="11" lengthAdjust="spacingAndGlyphs">Самар</text>
<text x="631.5" y="366.00" font-size="4.1" textLength="23" lengthAdjust="spacingAndGlyphs">01.03.2019</text>
<text x="698.2" y="366.00" font-size="4.1" textLength="6.8" lengthAdjust="spacingAndGlyphs">121</text>
<text x="556" y="373.00" font-size="4.1" textLength="11" lengthAdjust="spacingAndGlyphs">Самар</text>
<text x="631.5" y="373.00" font-size="4.1" textLength="23" lengthAdjust="spacingAndGlyphs">01.03.2019</text>
<text x="698.2" y="373.00" font-size="4.1" textLength="6.8" lengthAdjust="spacingAndGlyphs">121</text>
<text x="556" y="379.00" font-size="4.1" textLength="11" lengthAdjust="spacingAndGlyphs">Самар</text>
<text x="631.5" y="379.00" font-size="4.1" textLength="23" lengthAdjust="spacingAndGlyphs">01.03.2019</text>
<text x="698.2" y="379.00" font-size="4.1" textLength="6.8" lengthAdjust="spacingAndGlyphs">121</text>
<text x="556" y="386.00" font-size="4.1" textLength="8" lengthAdjust="spacingAndGlyphs">Уфа</text>
<text x="631.5" y="386.00" font-size="4.1" textLength="23" lengthAdjust="spacingAndGlyphs">01.03.2019</text>
<text x="699.1" y="386.00" font-size="4.1" textLength="5" lengthAdjust="spacingAndGlyphs">70</text>
<text x="556" y="392.00" font-size="4.1" textLength="8" lengthAdjust="spacingAndGlyphs">Уфа</text>
<text x="631.5" y="392.00" font-size="4.1" textLength="23" lengthAdjust="spacingAndGlyphs">01.03.2019</text>
<text x="699.1" y="392.00" font-size="4.1" textLength="5" lengthAdjust="spacingAndGlyphs">70</text>
<text x="556" y="399.00" font-size="4.1" textLength="8" lengthAdjust="spacingAndGlyphs">Уфа</text>
<text x="631.5" y="399.00" font-size="4.1" textLength="23" lengthAdjust="spacingAndGlyphs">01.03.2019</text>
<text x="699.1" y="399.00" font-size="4.1" textLength="5" lengthAdjust="spacingAndGlyphs">70</text>
<text x="556" y="406.00" font-size="4.1" textLength="8" lengthAdjust="spacingAndGlyphs">Уфа</text>
<text x="631.5" y="406.00" font-size="4.1" textLength="23" lengthAdjust="spacingAndGlyphs">01.03.2019</text>
<text x="699.1" y="406.00" font-size="4.1" textLength="5" lengthAdjust="spacingAndGlyphs">70</text>
<text x="556" y="412.00" font-size="4.1" textLength="8" lengthAdjust="spacingAndGlyphs">Уфа</text>
<text x="631.5" y="412.00" font-size="4.1" textLength="23" lengthAdjust="spacingAndGlyphs">01.03.2019</text>
<text x="699.1" y="412.00" font-size="4.1" textLength="5" lengthAdjust="spacingAndGlyphs">70</text>
<text x="556" y="419.00" font-size="4.1" textLength="8" lengthAdjust="spacingAndGlyphs">Уфа</text>
<text x="631.5" y="419.00" font-size="4.1" textLength="23" lengthAdjust="spacingAndGlyphs">01.03.2019</text>
<text x="699.1" y="419.00" font-size="4.1" textLength="5" lengthAdjust="spacingAndGlyphs">70</text>
<text x="556" y="425.00" font-size="4.1" textLength="8" lengthAdjust="spacingAndGlyphs">Уфа</text>
<text x="631.5" y="425.00" font-size="4.1" textLength="23" lengthAdjust="spacingAndGlyphs">01.03.2019</text>
<text x="699.1" y="425.00" font-size="4.1" textLength="5" lengthAdjust="spacingAndGlyphs">70</text>
<text x="556" y="432.00" font-size="4.1" textLength="8" lengthAdjust="spacingAndGlyphs">Уфа</text>
<text x="631.5" y="432.00" font-size="4.1" textLength="23" lengthAdjust="spacingAndGlyphs">01.03.2019</text>
<text x="699.1" y="432.00" font-size="4.1" textLength="5" lengthAdjust="spacingAndGlyphs">70</text>
<text x="556" y="438.00" font-size="4.1" textLength="8" lengthAdjust="spacingAndGlyphs">Уфа</text>
<text x="631.5" y="438.00" font-size="4.1" textLength="23" lengthAdjust="spacingAndGlyphs">01.03.2019</text>
<text x="698.2" y="438.00" font-size="4.1" textLength="6.8" lengthAdjust="spacingAndGlyphs">111</text>
<text x="556" y="445.00" font-size="4.1" textLength="8" lengthAdjust="spacingAndGlyphs">Уфа</text>
<text x="631.5" y="445.00" font-size="4.1" textLength="23" lengthAdjust="spacingAndGlyphs">01.03.2019</text>
<text x="698.2" y="445.00" font-size="4.1" textLength="6.8" lengthAdjust="spacingAndGlyphs">111</text>
<text x="556" y="452.00" font-size="4.1" textLength="8" lengthAdjust="spacingAndGlyphs">Уфа</text>
<text x="631.5" y="452.00" font-size="4.1" textLength="23" lengthAdjust="spacingAndGlyphs">01.03.2019</text>
<text x="698.2" y="452.00" font-size="4.1" textLength="6.8" lengthAdjust="spacingAndGlyphs">111</text>
<text x="556" y="458.00" font-size="4.1" textLength="8" lengthAdjust="spacingAndGlyphs">Уфа</text>
<text x="631.5" y="458.00" font-size="4.1" textLength="23" lengthAdjust="spacingAndGlyphs">01.03.2019</text>
<text x="698.2" y="458.00" font-size="4.1" textLength="6.8" lengthAdjust="spacingAndGlyphs">111</text>
<text x="556" y="465.00" font-size="4.1" textLength="8" lengthAdjust="spacingAndGlyphs">Уфа</text>
<text x="631.5" y="465.00" font-size="4.1" textLength="23" lengthAdjust="spacingAndGlyphs">01.03.2019</text>
<text x="698.2" y="465.00" font-size="4.1" textLength="6.8" lengthAdjust="spacingAndGlyphs">111</text>
<text x="556" y="471.00" font-size="4.1" textLength="8" lengthAdjust="spacingAndGlyphs">Уфа</text>
<text x="631.5" y="471.00" font-size="4.1" textLength="23" lengthAdjust="spacingAndGlyphs">01.03.2019</text>
<text x="698.2" y="471.00" font-size="4.1" textLength="6.8" lengthAdjust="spacingAndGlyphs">111</text>
<text x="556" y="478.00" font-size="4.1" textLength="8" lengthAdjust="spacingAndGlyphs">Уфа</text>
<text x="631.5" y="478.00" font-size="4.1" textLength="23" lengthAdjust="spacingAndGlyphs">01.03.2019</text>
<text x="698.2" y="478.00" font-size="4.1" textLength="6.8" lengthAdjust="spacingAndGlyphs">111</text>
<text x="556" y="484.00" font-size="4.1" textLength="8" lengthAdjust="spacingAndGlyphs">Уфа</text>
<text x="631.5" y="484.00" font-size="4.1" textLength="23" lengthAdjust="spacingAndGlyphs">01.03.2019</text>
<text x="698.2" y="484.00" font-size="4.1" textLength="6.8" lengthAdjust="spacingAndGlyphs">111</text>
<text x="556" y="491.00" font-size="4.1" textLength="8" lengthAdjust="spacingAndGlyphs">Уфа</text>
<text x="631.5" y="491.00" font-size="4.1" textLength="23" lengthAdjust="spacingAndGlyphs">01.03.2019</text>
<text x="698.2" y="491.00" font-size="4.1" textLength="6.8" lengthAdjust="spacingAndGlyphs">111</text>
<text x="556" y="498.00" font-size="4.1" textLength="8" lengthAdjust="spacingAndGlyphs">Уфа</text>
<text x="631.5" y="498.00" font-size="4.1" textLength="23" lengthAdjust="spacingAndGlyphs">01.03.2019</text>
<text x="698.2" y="498.00" font-size="4.1" textLength="6.8" lengthAdjust="spacingAndGlyphs">111</text>
<text x="556" y="504.00" font-size="4.1" textLength="8" lengthAdjust="spacingAndGlyphs">Уфа</text>
<text x="631.5" y="504.00" font-size="4.1" textLength="23" lengthAdjust="spacingAndGlyphs">01.03.2019</text>
<text x="698.2" y="504.00" font-size="4.1" textLength="6.8" lengthAdjust="spacingAndGlyphs">111</text>
<text x="556" y="511.00" font-size="4.1" textLength="8" lengthAdjust="spacingAndGlyphs">Уфа</text>
<text x="631.5" y="511.00" font-size="4.1" textLength="23" lengthAdjust="spacingAndGlyphs">01.03.2019</text>
<text x="698.2" y="511.00" font-size="4.1" textLength="6.8" lengthAdjust="spacingAndGlyphs">111</text>
<text x="556" y="517.00" font-size="4.1" textLength="8" lengthAdjust="spacingAndGlyphs">Уфа</text>
<text x="631.5" y="517.00" font-size="4.1" textLength="23" lengthAdjust="spacingAndGlyphs">01.03.2019</text>
<text x="698.2" y="517.00" font-size="4.1" textLength="6.8" lengthAdjust="spacingAndGlyphs">111</text>
<text x="556" y="524.00" font-size="4.1" textLength="8" lengthAdjust="spacingAndGlyphs">Уфа</text>
<text x="631.5" y="524.00" font-size="4.1" textLength="23" lengthAdjust="spacingAndGlyphs">01.03.2019</text>
<text x="698.2" y="524.00" font-size="4.1" textLength="6.8" lengthAdjust="spacingAndGlyphs">111</text>
<text x="556" y="530.00" font-size="4.1" textLength="8" lengthAdjust="spacingAndGlyphs">Уфа</text>
<text x="631.5" y="530.00" font-size="4.1" textLength="23" lengthAdjust="spacingAndGlyphs">01.03.2019</text>
<text x="698.2" y="530.00" font-size="4.1" textLength="6.8" lengthAdjust="spacingAndGlyphs">111</text>
<text x="556" y="537.00" font-size="4.1" textLength="8" lengthAdjust="spacingAndGlyphs">Уфа</text>
<text x="631.5" y="537.00" font-size="4.1" textLength="23" lengthAdjust="spacingAndGlyphs">01.03.2019</text>
<text x="698.2" y="537.00" font-size="4.1" textLength="6.8" lengthAdjust="spacingAndGlyphs">111</text>
<text x="556" y="544.00" font-size="4.1" textLength="8" lengthAdjust="spacingAndGlyphs">Уфа</text>
<text x="631.5" y="544.00" font-size="4.1" textLength="23" lengthAdjust="spacingAndGlyphs">01.03.2019</text>
<text x="698.2" y="544.00" font-size="4.1" textLength="6.8" lengthAdjust="spacingAndGlyphs">111</text>
</g>
<rect x="816" y="107" width="17" height="552" fill="url(#gTrack)"/>
<rect x="817.5" y="107.5" width="14" height="15.5" rx="2" fill="#eef0f3" stroke="#b4bac2"/>
<path d="M820 118 h9 l-4.5 -5 z" fill="#4e5a6c"/>
<rect x="817.5" y="297.5" width="14" height="42" rx="2" fill="#eceef1" stroke="#a8aeb6"/>
<path d="M821 315.5h8M821 317.5h8M821 319.5h8M821 321.5h8" stroke="#8a9a94" stroke-width="1"/>
<rect x="817.5" y="642.5" width="14" height="15.5" rx="2" fill="#eef0f3" stroke="#b4bac2"/>
<path d="M820 648 h9 l-4.5 5 z" fill="#4e5a6c"/>
<path d="M537.5 669 v9 l-5.5 -4.5 z" fill="#6a6c74"/>
<path d="M611 669 v9 l5.5 -4.5 z" fill="#6a6c74"/>
<defs><linearGradient id="gInp" x1="0" y1="0" x2="0" y2="1"><stop offset="0" stop-color="#d8dadc"/><stop offset="0.2" stop-color="#ffffff"/><stop offset="1" stop-color="#ffffff"/></linearGradient></defs>
<rect x="547" y="662" width="23" height="24" fill="url(#gInp)"/>
<rect x="547" y="663" width="23" height="1" fill="#8c8090"/>
<rect x="547" y="684" width="23" height="1" fill="#f4d890"/>
<rect x="551" y="666" width="6" height="15" fill="#7aaae8"/>
<text x="550.8" y="678" font-size="12.5" fill="#101010" textLength="6.5" lengthAdjust="spacingAndGlyphs">5</text>
<text x="576" y="678" font-size="12" fill="#1e1e1e" textLength="11.5" lengthAdjust="spacingAndGlyphs">из</text>
<text x="589.5" y="678" font-size="12.5" fill="#1a1a2a" textLength="12.5" lengthAdjust="spacingAndGlyphs">12</text>
<path d="M555.5 656 H562.0 A10.5 11.5 0 0 1 572.5 667.5 V684.0 A10.5 11.5 0 0 1 562.0 695.5 H555.5 A10.5 11.5 0 0 1 545 684.0 V667.5 A10.5 11.5 0 0 1 555.5 656 Z" fill="none" stroke="#000" stroke-opacity="0.18" stroke-width="7" transform="translate(1.5,1.5)"/>
<path d="M555.3 655.5 H561.9 A10.5 11.5 0 0 1 572.4 667.0 V683.7 A10.5 11.5 0 0 1 561.9 695.2 H555.3 A10.5 11.5 0 0 1 544.8 683.7 V667.0 A10.5 11.5 0 0 1 555.3 655.5 Z" fill="none" stroke="#ff0000" stroke-width="4.9"/>
<rect x="794.5" y="666.5" width="12" height="14" fill="#fff"/><path d="M797.5 666v15M803.5 666v15M794 669.5h13M794 677.5h13" stroke="#a8b4b8"/><path d="M794.5 681 v-14.5 h12" fill="none" stroke="#8a9898"/><path d="M806.5 666.5 v14 h-12" fill="none" stroke="#2a3040"/><path d="M797.5 669.5 h9" stroke="#6a9ad8" stroke-dasharray="1 1"/>
<rect x="812.5" y="663.5" width="21" height="21" rx="3" fill="#fde9a8" stroke="#e2984a"/>
<defs><linearGradient id="gZB" x1="0" y1="0" x2="0" y2="1"><stop offset="0" stop-color="#c8d8ea"/><stop offset="1" stop-color="#98acc0"/></linearGradient></defs>
<rect x="815.5" y="666.5" width="15" height="15" fill="url(#gZB)" stroke="#8898a8" stroke-width="0.8"/>
<rect x="819.5" y="670" width="8" height="7.5" fill="#fff" stroke="#7a8a9a" stroke-width="0.7"/><path d="M821 672h5M821 674h5" stroke="#6a7a8a" stroke-width="0.8"/><path d="M821 676h5" stroke="#3a78d0" stroke-width="0.9"/>
<path d="M823 666.5 l-1.8 2.3 h3.6 z M823 681.5 l-1.8 -2.3 h3.6 z M815.5 674 l2.3 -1.8 v3.6 z M830.5 674 l-2.3 -1.8 v3.6 z" fill="#101820"/>
</svg></body></html>
